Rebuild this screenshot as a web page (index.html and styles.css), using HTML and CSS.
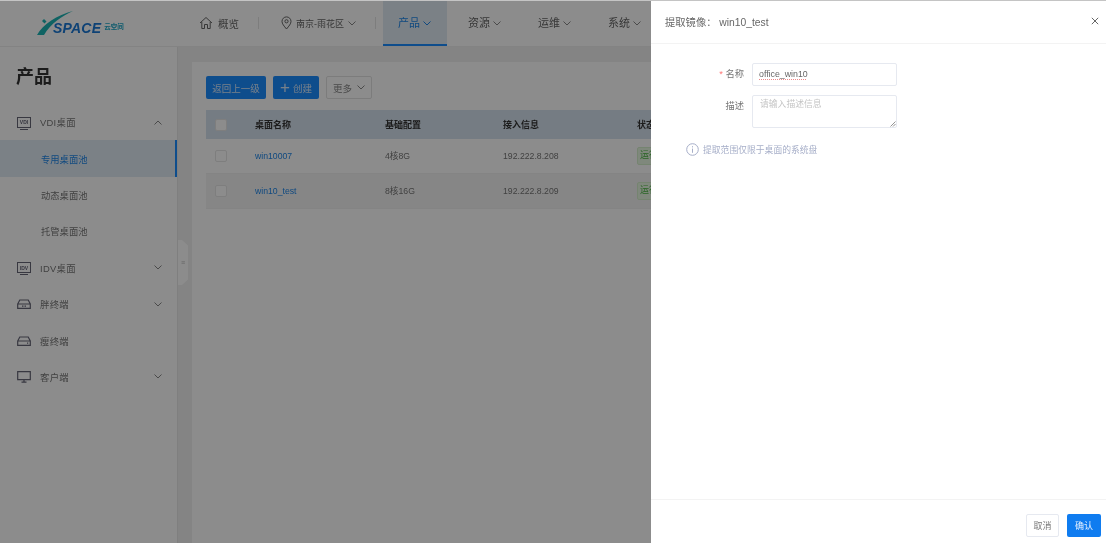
FILE: index.html
```html
<!DOCTYPE html>
<html lang="zh">
<head>
<meta charset="utf-8">
<title>提取镜像</title>
<link rel="stylesheet" href="styles.css">
</head>
<body>
<div class="app">
  <header class="topbar">
    <div class="logo">
      <svg class="logo-mark" width="40" height="26" viewBox="0 0 40 26">
        <path class="teal" d="M0 24 C6 13 20 4 36 0 C25 5 14 12 7 24 Z"/>
        <path class="teal" d="M7 8 L9.5 10.5 L7.5 12.5 L5 10 Z"/>
      </svg>
      <span class="logo-word">SPACE</span>
      <span class="logo-cn">云空间</span>
    </div>
    <div class="nav-home">
      <svg width="14" height="14" viewBox="0 0 14 14" class="ico"><path d="M1 7 L7 1.5 L13 7 M2.8 6 V12.5 H5.5 V8.5 H8.5 V12.5 H11.2 V6"/></svg>
      <span>概览</span>
    </div>
    <i class="nav-div"></i>
    <div class="nav-loc">
      <svg width="11" height="14" viewBox="0 0 11 14" class="ico"><path d="M5.5 13 C3 10 1 7.8 1 5.4 A4.5 4.5 0 0 1 10 5.4 C10 7.8 8 10 5.5 13 Z"/><circle cx="5.5" cy="5.3" r="1.6"/></svg>
      <span>南京-雨花区</span>
      <svg width="8" height="5" viewBox="0 0 8 5" class="ico chev"><path d="M.5 .5 L4 4 L7.5 .5"/></svg>
    </div>
    <i class="nav-div"></i>
    <nav class="tabs">
      <a class="tab active">产品<svg width="8" height="5" viewBox="0 0 8 5" class="ico chev"><path d="M.5 .5 L4 4 L7.5 .5"/></svg></a>
      <a class="tab">资源<svg width="8" height="5" viewBox="0 0 8 5" class="ico chev"><path d="M.5 .5 L4 4 L7.5 .5"/></svg></a>
      <a class="tab">运维<svg width="8" height="5" viewBox="0 0 8 5" class="ico chev"><path d="M.5 .5 L4 4 L7.5 .5"/></svg></a>
      <a class="tab">系统<svg width="8" height="5" viewBox="0 0 8 5" class="ico chev"><path d="M.5 .5 L4 4 L7.5 .5"/></svg></a>
    </nav>
  </header>

  <div class="body">
    <aside class="sidebar">
      <h1 class="side-title">产品</h1>
      <ul class="menu">
        <li class="menu-item">
          <span class="screen"><b>VDI</b></span><span class="menu-text">VDI桌面</span>
          <svg width="8" height="5" viewBox="0 0 8 5" class="ico chev end"><path d="M.5 4.5 L4 1 L7.5 4.5"/></svg>
        </li>
        <li class="sub selected">专用桌面池</li>
        <li class="sub">动态桌面池</li>
        <li class="sub">托管桌面池</li>
        <li class="menu-item">
          <span class="screen"><b>IDV</b></span><span class="menu-text">IDV桌面</span>
          <svg width="8" height="5" viewBox="0 0 8 5" class="ico chev end"><path d="M.5 .5 L4 4 L7.5 .5"/></svg>
        </li>
        <li class="menu-item">
          <svg width="14" height="10" viewBox="0 0 14 10" class="ico box"><path d="M.7 5 L2.8 1 H11.2 L13.3 5 V9.3 H.7 Z M.7 5 H13.3"/><path d="M5 7.2 H6.5 M7.5 7.2 H9"/></svg>
          <span class="menu-text">胖终端</span>
          <svg width="8" height="5" viewBox="0 0 8 5" class="ico chev end"><path d="M.5 .5 L4 4 L7.5 .5"/></svg>
        </li>
        <li class="menu-item">
          <svg width="14" height="10" viewBox="0 0 14 10" class="ico box"><path d="M.7 5 L2.8 1 H11.2 L13.3 5 V9.3 H.7 Z M.7 5 H13.3"/><path d="M10 7.2 H11.2"/></svg>
          <span class="menu-text">瘦终端</span>
        </li>
        <li class="menu-item">
          <svg width="14" height="12" viewBox="0 0 14 12" class="ico box"><path d="M.7 .7 H13.3 V8.6 H.7 Z M7 8.6 V11 M4.5 11.2 H9.5"/></svg>
          <span class="menu-text">客户端</span>
          <svg width="8" height="5" viewBox="0 0 8 5" class="ico chev end"><path d="M.5 .5 L4 4 L7.5 .5"/></svg>
        </li>
      </ul>
      <div class="collapse"><span>≡</span></div>
    </aside>

    <main class="main">
      <section class="card">
        <div class="toolbar">
          <button class="btn primary back">返回上一级</button>
          <button class="btn primary create"><span class="plus">+</span>创建</button>
          <button class="btn plain">更多<svg width="8" height="5" viewBox="0 0 8 5" class="ico chev"><path d="M.5 .5 L4 4 L7.5 .5"/></svg></button>
        </div>
        <div class="table">
          <div class="row head">
            <span class="cell-check"><i class="check"></i></span>
            <span>桌面名称</span><span>基础配置</span><span>接入信息</span><span>状态</span>
          </div>
          <div class="row">
            <span class="cell-check"><i class="check"></i></span>
            <a class="link">win10007</a><span>4核8G</span><span>192.222.8.208</span><span class="tag">运行中</span>
          </div>
          <div class="row shaded">
            <span class="cell-check"><i class="check"></i></span>
            <a class="link">win10_test</a><span>8核16G</span><span>192.222.8.209</span><span class="tag">运行中</span>
          </div>
        </div>
      </section>
    </main>
  </div>

  <div class="mask"></div>

  <aside class="drawer">
    <div class="drawer-head">
      <span class="drawer-title">提取镜像： win10_test</span>
      <svg width="8" height="8" viewBox="0 0 8 8" class="ico close"><path d="M.8 .8 L7.2 7.2 M7.2 .8 L.8 7.2"/></svg>
    </div>
    <div class="drawer-body">
      <div class="form-row">
        <label class="label"><em>*</em> 名称</label>
        <div class="input"><span class="typo">office_win10</span></div>
      </div>
      <div class="form-row">
        <label class="label">描述</label>
        <div class="textarea">请输入描述信息
          <svg width="6" height="6" viewBox="0 0 6 6" class="grip"><path d="M.5 5.5 L5.5 .5 M3 5.5 L5.5 3"/></svg>
        </div>
      </div>
      <div class="hint">
        <svg width="13" height="13" viewBox="0 0 13 13" class="info"><circle cx="6.5" cy="6.5" r="5.8"/><path d="M6.5 5.6 V9.8 M6.5 3.2 V4.4"/></svg>
        <span>提取范围仅限于桌面的系统盘</span>
      </div>
    </div>
    <div class="drawer-foot">
      <button class="btn ghost">取消</button>
      <button class="btn confirm">确认</button>
    </div>
  </aside>
  <div class="topline"></div>
</div>
</body>
</html>
```

FILE: styles.css
```css
* { box-sizing: border-box; }
html, body { margin: 0; height: 100%; overflow: hidden; }
body { font-family: "Liberation Sans", "Noto Sans CJK SC", sans-serif; color: #444; }
ul { list-style: none; margin: 0; padding: 0; }
button { font: inherit; border: 0; padding: 0; }

.app { position: relative; width: 1106px; height: 543px; overflow: hidden; background: #f0f0f0; display: flex; flex-direction: column; filter: blur(.5px); }
.topline { position: absolute; left: 0; right: 0; top: 0; height: 1px; background: #c4c4c4; }

.ico { fill: none; stroke: #666; stroke-width: 1; flex: none; }
.chev { stroke: #888; }

.topbar { height: 47px; flex: none; background: #fff; display: flex; align-items: center; border-bottom: 1px solid #eeeeee; color: #666; }
.logo { width: 199px; height: 46px; flex: none; padding: 0 0 10px 37px; display: flex; position: relative; align-items: flex-end; }
.logo-mark { position: absolute; left: 37px; top: 11px; }
.teal { fill: #1db5b5; stroke: none; }
.logo-word { margin-left: 16px; font-size: 14px; font-weight: 700; font-style: italic; color: #1b78d6; line-height: 15px; letter-spacing: .2px; }
.logo-cn { margin-left: 3px; font-size: 6.5px; line-height: 12px; color: #1fa8c8; font-weight: 700; padding-bottom: 3px; }
.nav-home { display: flex; align-items: center; gap: 5px; font-size: 10.5px; width: 59px; flex: none; }
.nav-div { width: 1px; height: 12px; background: #e4e4e4; flex: none; }
.nav-loc { display: flex; align-items: center; gap: 4px; font-size: 9px; margin: 0 21px 0 22px; width: 73px; flex: none; white-space: nowrap; }
.tabs { display: flex; gap: 5px; margin-left: 7px; height: 46px; }
.tab { width: 65px; height: 46px; padding-left: 15px; padding-top: 16px; font-size: 11px; line-height: 14px; color: #666; flex: none; border-bottom: 2px solid transparent; display: flex; align-items: flex-start; gap: 3px; }
.tab .chev { margin-top: 5px; }
.tab.active { width: 64px; color: #1f86e8; background: #e0ebf5; border-bottom-color: #1a8cff; margin-right: 1px; }
.tab.active .chev { stroke: #1f86e8; }

.body { flex: 1; display: flex; min-height: 0; }
.sidebar { width: 178px; flex: none; background: #fff; border-right: 1px solid #e8e8e8; position: relative; color: #777; }
.side-title { margin: 0; padding: 18px 0 0 16px; height: 57px; font-size: 18px; line-height: 24px; font-weight: 700; color: #333; }
.menu-item { height: 36.4px; display: flex; align-items: center; padding-left: 17px; padding-right: 15px; font-size: 9.4px; letter-spacing: .3px; }
.menu-text { margin-left: 9px; }
.end { margin-left: auto; }
.box { stroke: #667; stroke-width: 1.2; }
.screen { width: 14px; height: 11px; border: 1px solid #667; position: relative; display: flex; align-items: center; justify-content: center; flex: none; color: #667; }
.screen::after { content: ""; position: absolute; left: 2px; right: 2px; bottom: -3px; height: 1px; background: #667; }
.screen b { font-size: 5px; line-height: 6px; letter-spacing: 0; }
.sub { height: 36.4px; display: flex; align-items: center; padding-left: 41px; font-size: 9.3px; }
.sub.selected { background: #e0ebf5; color: #1f86e8; border-right: 2px solid #1a8cff; }
.collapse { position: absolute; right: -11px; top: 193px; width: 10px; height: 45px; background: #fff; clip-path: polygon(0 0, 40% 0, 100% 12%, 100% 88%, 40% 100%, 0 100%); display: flex; align-items: center; justify-content: center; font-size: 7px; color: #bbb; }

.main { flex: 1; min-width: 0; padding: 15px 0 0 14px; }
.card { background: #fff; height: 100%; padding: 14px 0 0 14px; }
.toolbar { display: flex; gap: 7px; height: 34px; padding-bottom: 11px; }
.btn { height: 23px; border-radius: 2px; font-size: 9.5px; display: inline-flex; align-items: center; justify-content: center; white-space: nowrap; }
.primary { background: #1a8cff; color: #d8e9fc; }
.back { width: 60px; }
.create { width: 46px; }
.plus { font-size: 17px; line-height: 16px; margin-right: 3px; font-weight: 400; }
.plain { background: #fff; border: 1px solid #e2e2e2; color: #888; width: 46px; gap: 5px; }
.table { font-size: 8.7px; color: #777; }
.row { height: 35px; display: grid; grid-template-columns: 49px 130px 118px 134px 100px; align-items: center; border-bottom: 1px solid #f0f0f0; line-height: 14px; }
.row > span, .row > a { display: block; height: 14px; overflow: visible; }
.row.head { height: 29px; background: #d6e2ee; color: #333; font-weight: 700; font-size: 9px; border-bottom: 0; }
.row.shaded { background: #f5f5f5; }
.row > .cell-check { padding-left: 9px; display: flex; height: 12px; }
.check { width: 12px; height: 12px; border: 1px solid #e6e6e6; background: #fff; border-radius: 2px; display: block; }
.link { color: #1f86e8; }
.row > .tag { width: 60px; height: 18px; background: #e8f7e2; border: 1px solid #d6f0cc; color: #4cb844; border-radius: 2px; padding-left: 2px; line-height: 15px; white-space: nowrap; font-size: 9px; }

.mask { position: absolute; inset: 0; background: rgba(0, 0, 0, .45); }

.drawer { position: absolute; top: 1px; right: 0; bottom: 0; width: 455px; background: #fff; display: flex; flex-direction: column; }
.drawer-head { height: 43px; flex: none; border-bottom: 1px solid #f3f3f3; display: flex; align-items: center; justify-content: space-between; padding: 0 7px 2px 14px; }
.drawer-title { font-size: 10.3px; color: #666; }
.close { stroke: #666; }
.drawer-body { flex: 1; padding-top: 19px; }
.form-row { display: flex; margin-bottom: 9px; }
.label { width: 93px; margin-right: 8px; flex: none; text-align: right; font-size: 9.3px; line-height: 23px; color: #777; }
.label em { color: #f77; font-style: normal; }
.input { width: 145px; height: 23px; border: 1px solid #e6e9f0; border-radius: 2px; font-size: 8.8px; line-height: 21px; padding-left: 6px; color: #666; }
.typo { text-decoration: underline dotted #e88 .5px; text-underline-offset: 2px; }
.textarea { position: relative; width: 145px; height: 33px; border: 1px solid #e6e9f0; border-radius: 2px; font-size: 8.8px; line-height: 16px; padding: 0 0 0 7px; color: #c4c4c4; }
.grip { position: absolute; right: 0; bottom: 0; fill: none; stroke: #777; stroke-width: .8; }
.hint { display: flex; align-items: center; gap: 4px; padding-left: 35px; margin-top: 15px; font-size: 8.8px; color: #a6aec8; }
.info { fill: none; stroke: #a6aec8; stroke-width: 1; flex: none; }
.drawer-foot { height: 44px; flex: none; border-top: 1px solid #f3f3f3; display: flex; justify-content: flex-end; align-items: flex-start; gap: 8px; padding: 14px 5px 0 0; }
.ghost { width: 33px; background: #fff; border: 1px solid #e6e9f0; color: #777; font-size: 9px; }
.confirm { width: 34px; background: #0f7cf0; color: #e8f2ff; font-size: 9px; }
```
